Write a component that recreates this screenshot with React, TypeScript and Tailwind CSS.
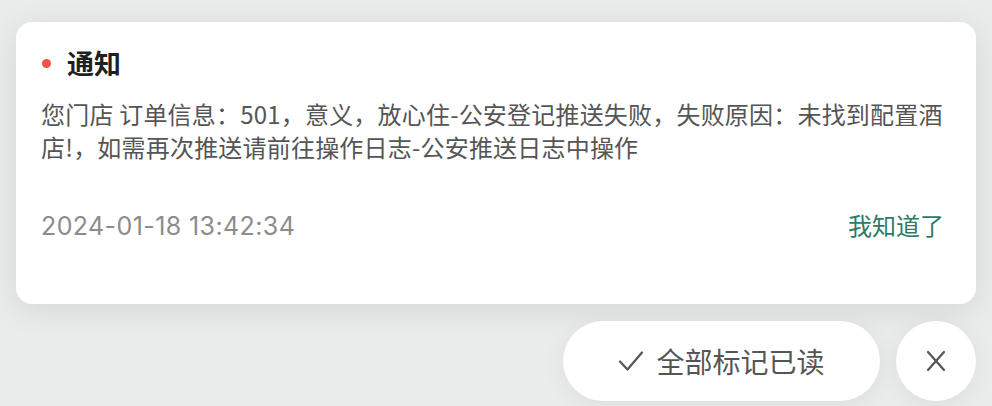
export default function App() {
  return (
    <div
      className="w-[992px] h-[406px] overflow-hidden bg-[#e9ecea] px-4 pt-[22px]"
      style={{ fontFamily: '"Noto Sans CJK SC", "Noto Sans", sans-serif' }}
    >
      {/* Notification card */}
      <div className="w-[960px] rounded-2xl bg-white pl-[25px] pr-[32px] pt-[23px] pb-[63px] shadow-[0_6px_32px_rgba(0,0,0,0.09)]">
        <div className="flex items-center gap-[16px] h-9">
          <span className="w-[9px] h-[9px] rounded-full bg-[#ef5247] ml-[1px]" />
          <h2 className="text-[27px] font-bold text-[#1f1f1f] leading-9">通知</h2>
        </div>
        <p className="mt-4 text-[24px] leading-[33px] tracking-[0.2px] text-[#555555]">
          您门店 订单信息：501，意义，放心住-公安登记推送失败，失败原因：未找到配置酒店!，如需再次推送请前往操作日志-公安推送日志中操作
        </p>
        <div className="mt-[46px] flex items-center justify-between h-8">
          <span className="text-[25px] leading-8 pt-[2px] tracking-[0.4px] text-[#8c8c8c] font-[Inter,sans-serif]">2024-01-18 13:42:34</span>
          <button className="text-[24px] text-[#2f7a66]">我知道了</button>
        </div>
      </div>

      {/* Actions */}
      <div className="mt-[17px] flex justify-end gap-4">
        <button className="w-[317px] h-20 rounded-full bg-white flex items-center justify-center gap-3 shadow-[0_4px_24px_rgba(0,0,0,0.06)] text-[28px] text-[#555555]">
          <svg width="26" height="22" viewBox="0 0 26 22" fill="none" stroke="#555555" strokeWidth="2.2" strokeLinecap="round" strokeLinejoin="round">
            <path d="M2 11.5 L9.5 19.5 L24 2.5" />
          </svg>
          <span>全部标记已读</span>
        </button>
        <button className="w-20 h-20 rounded-full bg-white flex items-center justify-center shadow-[0_4px_24px_rgba(0,0,0,0.06)]">
          <svg width="20" height="22" viewBox="0 0 20 22" fill="none" stroke="#555555" strokeWidth="2.2" strokeLinecap="round">
            <path d="M2 2 L18 20 M18 2 L2 20" />
          </svg>
        </button>
      </div>
    </div>
  );
}
